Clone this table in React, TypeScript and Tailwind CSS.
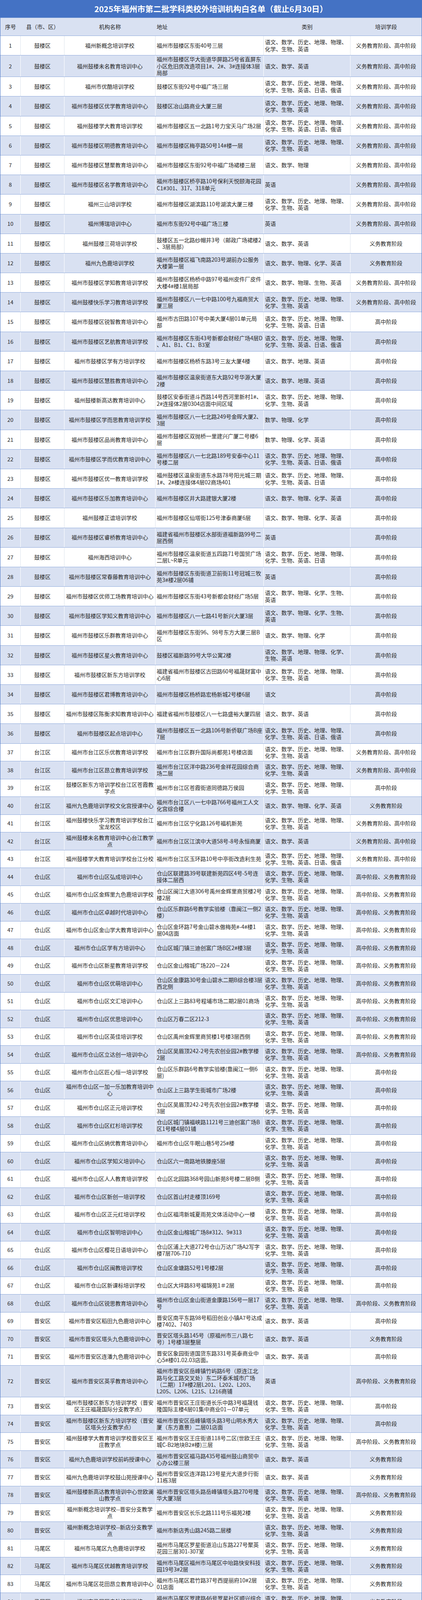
import React from 'react';

type Row = [string, string, string, string];

// 类别
const Y = '语文、数学、历史、地理、物理、化学、生物、英语';
const YJ = Y + '、日语';
const YJE = Y + '、日语、俄语';
const MQ = Y + '、政治';
const F9 = '语文、数学、英语、物理、化学、生物、历史、地理、政治';
const F9B = '语文、数学、英语、物理、化学、生物、地理、历史、政治';
const F7 = '语文、数学、英语、物理、化学、生物、地理';
const G8 = '语文、数学、英语、物理、化学、生物、地理、历史';
const YT = '语文、数学、政治、历史、地理、物理、化学、生物、英语';
const SY = '语文、数学、英语';
const W5 = '语文、数学、物理、化学、英语';

// 培训学段
const A = '义务教育阶段、高中阶段';
const B = '义务教育阶段';
const C = '高中阶段';
const D = '高中阶段、义务教育阶段';
const E14 = '义务教育阶段（14周岁以\n上）、高中阶段';
const M1 = '义务教育阶段、高中阶段学\n科类';
const M2 = '高中阶段学科类';
const CR = '高中阶段、成人';

const groups: [string, Row[]][] = [
  ['鼓楼区', [
    ['福州新概念培训学校', '福州市鼓楼区东街40号三层', Y, A],
    ['福州鼓楼未名教育培训中心', '福州市鼓楼区华大街道华屏路25号省直屏东\n小区危旧房改造项目1#、2#、3#连接体3层\n局部', SY, A],
    ['福州市优酷培训学校', '鼓楼区东街92号中福广场三层', YJE, A],
    ['福州市鼓楼区优学教育培训中心', '鼓楼区冶山路商业大厦三层', Y, A],
    ['福州鼓楼学大教育培训学校', '福州市鼓楼区五一北路1号力宝天马广场2层', YJE, A],
    ['福州市鼓楼区明德教育培训中心', '福州市鼓楼区梅亭路50号14#楼一层', Y, A],
    ['福州市鼓楼区慧聚教育培训中心', '福州市鼓楼区东街92号中福广场裙楼三层', '语文、数学、物理', A],
    ['福州市鼓楼区名学教育培训中心', '福州市鼓楼区桥亭路10号保利天悦颐海花园\nC1#301、317、318单元', '英语', A],
    ['福州三山培训学校', '福州市鼓楼区湖滨路110号湖滨大厦三楼', Y, A],
    ['福州博瑞培训中心', '福州市东街92号中福广场三楼', '英语', A],
    ['福州鼓楼三荷培训学校', '鼓楼区五一北路纱帽井3号（邮政广场裙楼2\n、3层局部）', SY, B],
    ['福州九色鹿培训学校', '福州市鼓楼区福飞南路203号湖前办公服务\n大楼第一层', W5, B],
    ['福州市鼓楼区学知教育培训学校', '福州市鼓楼区杨桥中路97号福州皮件厂皮件\n大楼4#楼1层局部', '语文、数学、物理、生物、英语', A],
    ['福州鼓楼快乐学习教育培训学校', '福州市鼓楼区八一七中路100号九福商贸大\n厦三层', Y, A],
    ['福州市鼓楼区锐智教育培训中心', '福州市古田路107号中美大厦4层01单元局\n部', YJ, C],
    ['福州市鼓楼区艺航教育培训学校', '福州市鼓楼区东街43号新都会财经广场4层D\n、A1、B1、C1、B3室', YJE, C],
    ['福州市鼓楼区学有方培训学校', '福州市鼓楼区杨桥东路3号三友大厦4楼', '语文、数学、地理、英语', C],
    ['福州市鼓楼区慧胜教育培训中心', '福州市鼓楼区温泉街道东大路92号华源大厦\n2楼', '语文、数学、地理、英语', C],
    ['福州鼓楼新高达教育培训中心', '鼓楼区安泰街道斗西路14号西河里新村1#、\n2#连接体2层0304店面中间区域', Y, C],
    ['福州市鼓楼区学而思教育培训学校', '福州市鼓楼区八一七北路249号金晖大厦2、\n3层', '数学、物理、化学', C],
    ['福州市鼓楼区品尚教育培训中心', '福州市鼓楼区双抛桥一里建兴广厦二号楼6\n层', '数学、物理、化学、英语', C],
    ['福州市鼓楼区学而优教育培训中心', '福州市鼓楼区八一七北路189号安泰中心11\n号楼二层', YJE, C],
    ['福州市鼓楼区优一教育培训学校', '福州鼓楼区温泉街道东水路78号阳光城三期\n1#、2#楼连接体4层02商场401', YJ, C],
    ['福州市鼓楼区乐加教育培训中心', '福州市鼓楼区井大路建银大厦2楼', W5, C],
    ['福州鼓楼正谊培训学校', '福州市鼓楼区仙塔街125号津泰商厦6层', W5, C],
    ['福州市鼓楼区睿桥教育培训中心', '福建省福州市鼓楼区水部街道福新路99号二\n层西侧', '英语', C],
    ['福州海西培训中心', '福州市鼓楼区温泉街道五四路71号国贸广场\n二层L~R单元', YJ, C],
    ['福州市鼓楼区常春藤教育培训中心', '福州市鼓楼区东街街道卫前街11号冠城三牧\n苑3#楼2层06铺', '英语', C],
    ['福州市鼓楼区优师工场教育培训中心', '福州市鼓楼区东街43号新都会财经广场5层', '语文、数学、物理、化学、生物、英语', C],
    ['福州市鼓楼区学知义教育培训中心', '福州市鼓楼区八一七路41号新兴大厦3层', '语文、数学、物理、化学、生物、英语', C],
    ['福州市鼓楼区乐群教育培训中心', '福州市鼓楼区东街96、98号东方大厦三层B\n区', '语文、数学、物理、化学', C],
    ['福州市鼓楼区星火教育培训中心', '鼓楼区福新路99号大华公寓2楼', '语文、数学、地理、物理、化学、生物、英语', C],
    ['福州市鼓楼区新东方培训学校', '福建省福州市鼓楼区古田路60号福晟财富中\n心6层', Y, C],
    ['福州市鼓楼区君博教育培训中心', '福州市鼓楼区杨桥路宏杨新城2号楼6层', '语文', C],
    ['福州市鼓楼区陈衡求知教育培训中心', '福建省福州市鼓楼区八一七路盛裕大厦四层', SY, C],
    ['福州市鼓楼区起点培训中心', '福州市鼓楼区五一北路106号新侨联广场B座\n7层', YJE, C],
  ]],
  ['台江区', [
    ['福州市台江区乐优教育培训学校', '福州市台江区群升国际尚都苑1号楼店面', Y, A],
    ['福州市台江区昂立教育培训学校', '福州市台江区洋中路236号金祥花园综合商\n场二层', Y, A],
    ['鼓楼区新东方培训学校台江区苍霞教\n学点', '福州市台江区苍霞街道同德路万侯园', Y, C],
    ['福州九色鹿培训学校文化宫授课中心', '福州市台江区八一七中路766号福州工人文\n化宫综合楼', W5, B],
    ['福州鼓楼快乐学习教育培训学校台江\n宝龙校区', '福州市台江区宁化路126号福机新苑', Y, A],
    ['福州鼓楼未名教育培训中心台江教学\n点', '福州市台江区江滨中大道58号-8号永恒商厦', SY, A],
    ['福州鼓楼学大教育培训学校台江分校', '福州市台江区玉环路10号中亭街改造利生苑', YJE, A],
  ]],
  ['仓山区', [
    ['福州市仓山区弘成培训中心', '仓山区联建路39号联建新苑四区4号-5号连\n接体二层西', Y, D],
    ['福州市仓山区金辉里九色鹿培训学校', '仓山区闽江大道306号禹州金辉里商贸楼2号\n楼2层', Y, D],
    ['福州市仓山区卓越时代培训中心', '仓山区乐群路6号教学实验楼（靠闽江一侧2\n楼）', Y, D],
    ['福州市仓山区金山学大教育培训中心', '仓山区金环路7号金山碧水傲梅苑#-4#楼1\n层04店面', Y, D],
    ['福州市仓山区学有方培训中心', '仓山区城门镇三迪创富广场B区2#楼3层', Y, D],
    ['福州市仓山区新星教育培训学校', '仓山区金山榕城广场220－224', Y, D],
    ['福州市仓山区优萌培训中心', '仓山区金康路30号金山碧水二期B综合楼3层\n西北侧', Y, D],
    ['福州市仓山区文汇培训中心', '仓山区上三路83号程埔市场二期2层01商场', Y, D],
    ['福州市仓山区优思培训中心', '仓山区万春二区212-3', Y, D],
    ['福州市仓山区英佳培训学校', '仓山区禹州金辉里商贸楼1号楼3层西侧', Y, D],
    ['福州市仓山区立达创一培训中心', '仓山区吴眉顶242-2号先农创业园2#教学楼\n2层', Y, D],
    ['福州市仓山区匠心恒一培训学校', '仓山区乐群路6号教学实验楼(靠闽江一侧6\n层)', Y, C],
    ['福州市仓山区一加一乐加教育培训中\n心', '仓山区上三路学生街城市广场2楼', Y, C],
    ['福州市仓山区正元培训学校', '仓山区吴眉顶242-2号先农创业园2#教学楼\n3层', Y, C],
    ['福州市仓山区红杉培训学校', '仓山区城门镇福峡路1121号三迪创富广场B\n区1号楼4层01铺', Y, C],
    ['福州市仓山区纳优教育培训中心', '福州市仓山区牛眠山巷5号25#楼', Y, C],
    ['福州市仓山区学知义培训中心', '仓山区六一南路地铁滕座5层', Y, C],
    ['福州市仓山区人人教育培训学校', '仓山区北园路368号园山新苑8号楼二层B侧', Y, C],
    ['福州市仓山区新创一培训学校', '仓山区首山村走楼顶169号', Y, C],
    ['福州市仓山区正元红培训学校', '仓山区福湾新城夏雨苑文体活动中心一楼', Y, C],
    ['福州市仓山区智明培训中心', '仓山区金山榕城广场8#312、9#313', Y, C],
    ['福州市仓山区樱花日语培训中心', '仓山区浦上大道272号仓山万达广场A2写字\n楼7层706-710', Y, C],
    ['福州市仓山区闽教培训学校', '仓山区金塘路52号1号楼2层', Y, C],
    ['福州市仓山区新课标培训学校', '仓山区大坪路83号福锦苑1＃2层', Y, C],
    ['福州市仓山区锐思教育培训中心', '福州市仓山区金山街道金康路156号一层17\n号', Y, D],
  ]],
  ['晋安区', [
    ['福州市晋安区稻田九色鹿培训中心', '晋安区南平东路98号稻田创业小镇A7号达成\n楼7402、7403', SY, C],
    ['福州市晋安区塔头九色鹿培训中心', '晋安区塔头路145号（原福州市三八路七\n号）1号楼3层整层', SY, B],
    ['福州市晋安区连潘九色鹿培训中心', '晋安区象园街道国货东路331号英泰商业中\n心5#楼01.02.03店面。', SY, C],
    ['福州市晋安区英孚教育培训中心', '福州市晋安区岳峰镇竹屿路6号（原连江北\n路与化工路交叉处）东二环泰禾城市广场\n（二期）17#楼2层L201、L202、L203、\nL205、L206、L215、L216商铺', '英语', D],
    ['福州市鼓楼区新东方培训学校（晋安\n区王庄福晟国际分支教学点）', '福州市晋安区王庄街道长乐中路3号福晟钱\n隆国际主楼4层01集中商业01－07单元', Y, C],
    ['福州市鼓楼区新东方培训学校（晋安\n区塔头分支教学点）', '福州市晋安区岳峰镇塔头路3号山明水秀大\n厦（东方嘉景）二层01店面', Y, C],
    ['福州鼓楼学大教育培训学校晋安区王\n庄教学点', '福州市晋安区王庄街道118号二区(世欧王庄\n城C-B2地块B2#楼)三层', Y, D],
    ['福州九色鹿培训学校前屿授课中心', '福州市晋安区福马路435号福州鼓山商贸中\n心办公楼三层', SY, B],
    ['福州九色鹿培训学校鼓山苑授课中心', '福州市晋安区连洋路123号星光大道步行街\n11栋3层', SY, B],
    ['福州鼓楼新高达教育培训中心世欧澜\n山教学点', '福州市晋安区塔头路岳峰镇塔头路270号隆\n华大厦3层', Y, D],
    ['福州新概念培训学校--晋安分支教学\n点', '福州市晋安区长乐北路111号乐福苑2楼', Y, B],
    ['福州新概念培训学校--新店分支教学\n点', '福州市新店秀山路245路二层楼', Y, B],
  ]],
  ['马尾区', [
    ['福州市马尾区九色鹿培训学校', '福州市马尾区罗星街道沿山东路227号聚英\n花园三层301-307室', Y, B],
    ['福州市马尾区优越教育培训学校', '福州市马尾区福州市马尾区中坮路快安科技\n园19号3#2层', Y, B],
    ['福州市马尾区花田昂立教育培训中心', '福州市马尾区君竹路37号西提丽府10#2层\n01店面', Y, B],
    ['福州市马尾区启航培训学校', '福州市马尾区罗建路46号罗星社区顺兴综合\n楼', Y, B],
  ]],
  ['长乐区', [
    ['福州市长乐区笃慧教育培训学校', '长乐区吴航街道吉祥花园一座三层', '数学、英语', B],
    ['福州市长乐区云思英语培训学校', '长乐区吴航街道盛昌花园综合楼二层3号店', '英语', B],
    ['福州市长乐区正思教育培训中心', '福州市长乐区吴航街道朝阳中路101号', W5, C],
    ['福州市长乐区新方成教育培训中心', '长乐区航城街道会堂路225号经纬楼2#楼2\n层', W5, C],
    ['福州市长乐区三思教育培训中心', '长乐区吴航街道郑和中路15号十洋国际商场\n701室', '数学、物理、化学、英语', C],
    ['福州市长乐区创新文化艺术培训中心', '长乐区吴航街道西洋中路247号东方御苑2层', YJE, C],
    ['福州市长乐区鼎尖教育培训中心', '长乐区郑和东路102号燃料公司综合大楼二\n层', '数学、英语', C],
    ['福州市长乐区航光教育培训中心', '长乐区朝阳中路166号', Y, C],
    ['福州市长乐区民生培训学校', '长乐区西洋南路193号', '语文、数学、物理、化学', C],
  ]],
  ['福清市', [
    ['福清市典点星教育培训学校', '福清市玉屏街道大圣路千面山片区改造安置\n区7#2-5层', F9, A],
    ['福清市乐优教育培训学校', '福清市玉屏街道向高街明中、明华楼夹层\n01-10店面', F9, A],
    ['福清市恩典教育培训中心', '福清市玉屏街道向高街明商徽二层', F7, A],
    ['福清市读书郎文化培训中心', '福清市音西街道万达广场A1座写字楼505、\n506、507室', F7, A],
    ['福清市一诺文化培训中心', '福清市音西街道国际商展中心4楼', F9B, E14],
    ['福清市远英教育培训中心', '福清市音西街道音西村洋埔村中联天御一期\n16#楼4层', F9B, E14],
    ['福清市心华教育培训中心', '福清市音西街道国际华城A13号楼205店面', F9B, A],
  ]],
  ['闽侯县', [
    ['闽侯县乐学林培训学校', '闽侯县甘蔗街道昙石山中大道118号新城丽\n景A区3号楼二层213', Y, M1],
    ['闽侯县九色鹿培训中心', '闽侯县上街镇邱阳东路8号2幢、3幢', SY, '义务教育阶段学科类'],
    ['闽侯县昂立教育培训中心', '闽侯县上街邱阳东路8号2幢上街红峰社区文\n化综合活动中心', SY, M1],
    ['闽侯县学得到培训中心', '闽侯县青口镇青口建筑材料供应有限公司\n（青口建材市场）富竹大厦2层', Y, M1],
    ['闽侯县骐丽三枚培训中心', '闽侯县上街镇邱阳东路8号汇锋广场3号楼2\n层', YJ, M2],
    ['闽侯县胜大教育培训学校', '闽侯县上街镇中美村2号安置地12#综合楼二\n层北侧', YJ, M2],
    ['闽侯县吐故纳新培训中心', '福州市闽侯县南通镇芹洲路6号（海峡鑫天\n地）瑞特戴斯酒店二楼楼梯西侧办公区', YJE, M2],
  ]],
  ['永泰县', [
    ['永泰县新高博培训学校', '永泰县樟城镇北门路72-1号三木中央天城2\n号楼201店面', YT, D],
    ['永泰县新永阳培训学校', '永泰县城峰镇动车站广场店面', YT, D],
  ]],
  ['罗源县', [
    ['罗源县佳未来教育培训中心', '罗源滨海风情商业街D1-13、14、15', '语文、数学、物理、英语', D],
  ]],
  ['连江县', [
    ['连江县学知教育培训中心', '连江县凤城镇金安东路5号鼎森中央公园一\n区A5幢2层', '外语、语文、数学', B],
    ['连江县吉米怀英语培训中心', '连江县凤城镇金安东路2号格林威治二区5幢\n二层商业D区', '外语', B],
    ['连江县吉米怀英语培训中心太一教学\n点', '连江县凤城镇文山北路5号太一新天地3#二\n层7店', '外语', B],
    ['连江县新星教育培训中心', '连江县凤城镇文山北路7号金凤名都3#楼二\n层', '数学、外语、物理、化学', D],
    ['连江县云儒文化教育培训学校', '连江县凤城镇马祖东路3号碧水龙城3幢二层\n-三层', '语文、数学、英语高中学科', C],
  ]],
  ['闽清县', [
    ['闽清县育才培训学校', '福州市闽清县梅城镇城大路村综合楼(大路\n村7号)', MQ, C],
    ['闽清县上德培训学校', '福州市闽清县雄江镇梅雄村207-1号', MQ, C],
  ]],
  ['高新区', [
    ['福州高新区昂立教育培训中心', '福州高新区南屿镇旗山路10号正祥林语墅4-\n12#、4-13#集中式商业网点13、15、16店\n面', SY, B],
    ['福州高新区优教酷学培训学校', '福州高新区南屿镇旗山路1号旗山文城商业\n3#楼一层107-112、114-120店面', SY, B],
    ['福州高新区高宏培训学校', '福州高新区南屿镇乌龙江南大道168号福州\n诚达电子高新技术有限公司综合楼一至二层', F7, CR],
    ['福州高新区好升学培训学校', '福州高新区南屿镇乌龙江南大道79号信通国\n际中心4#3-4层', G8, CR],
    ['福州高新区微铭教育培训学校', '福州高新区南屿镇后山村中元艺术大厦3号\n楼二层东侧', G8, C],
    ['福州高新区易考培训中心', '福州高新区南屿镇信通国际中心B地块4#楼5\n层', F7, CR],
    ['福州高新区乐思培训中心', '福州高新区南屿镇信通国际中心B地块4#楼6\n层', G8, CR],
    ['福州高新区闽文培训学校', '福州高新区南屿镇晓岐路77号福建同源原动\n力置业有限公司综合楼二期\n（现：信通悦江公馆）3#楼3层', F7, C],
  ]],
];

const rows = groups.flatMap(([district, list]) => list.map((r) => ({ district, r })));

const rowHeight = (n: number) => {
  if (n === 2) return 'h-[55px]';
  if (n === 72) return 'h-[81px]';
  if (n === 118) return 'h-[53px]';
  if (n === 125) return 'h-[49px]';
  return n <= 36 ? 'h-[50.2px]' : 'h-[45.5px]';
};

const COLS = 'grid grid-cols-[52px_112px_233px_277px_222px_182px]';

export default function App() {
  return (
    <div className="w-[1080px] border-x border-[#4472C4] bg-white text-[14px] leading-[17.3px] text-[#262626] [font-family:'Noto_Sans_CJK_SC',sans-serif]">
      <div className="flex h-[46px] items-center justify-center border-b border-[#8EA9DB] bg-[#4472C4] text-[20.5px] font-bold text-white">
        2025年福州市第二批学科类校外培训机构白名单（截止6月30日）
      </div>

      <div className={`${COLS} h-[46px] border-b border-[#8EA9DB] bg-[#D9E1F2]`}>
        <div className="flex items-center justify-center">序号</div>
        <div className="flex items-center justify-center">县（市、区）</div>
        <div className="flex items-center justify-center">机构名称</div>
        <div className="flex items-center pl-[3px]">地址</div>
        <div className="flex items-center justify-center">类别</div>
        <div className="flex items-center justify-center">培训学段</div>
      </div>

      {rows.map(({ district, r }, i) => {
        const n = i + 1;
        const even = n % 2 === 0;
        const bg = even ? 'bg-[#D9E1F2]' : 'bg-white';
        const line = even ? 'border-white' : 'border-[#DCE2EC]';
        const [name, address, subjects, stage] = r;
        return (
          <div key={n} className={`${COLS} ${rowHeight(n)} ${bg} border-b border-[#8EA9DB]`}>
            <div className={`flex items-center justify-center border-r ${line}`}>{n}</div>
            <div className={`flex items-center justify-center border-r ${line}`}>{district}</div>
            <div className={`flex items-center justify-center border-r ${line}`}>
              <span className="whitespace-pre-line text-center">{name}</span>
            </div>
            <div className={`flex items-center border-r pl-[3px] ${line}`}>
              <span className="whitespace-pre-line">{address}</span>
            </div>
            <div className={`flex items-center border-r pl-[3px] ${line}`}>
              <span>{subjects}</span>
            </div>
            <div className="flex items-center justify-center">
              <span className="whitespace-pre-line text-center">{stage}</span>
            </div>
          </div>
        );
      })}
    </div>
  );
}
